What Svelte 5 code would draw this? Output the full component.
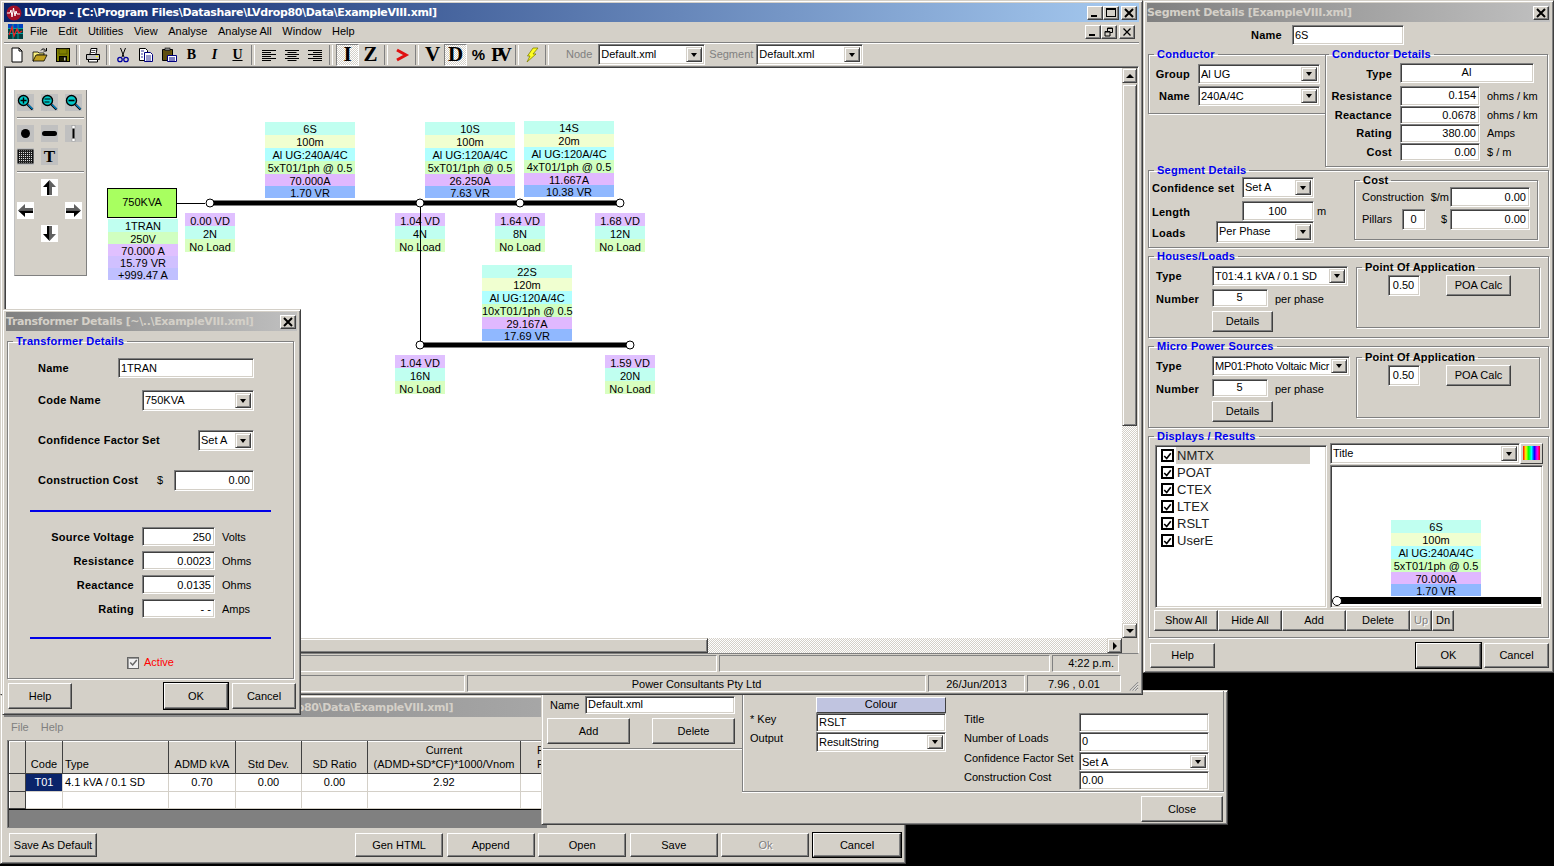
<script>
  const segStacks = [
    { x: 265, y: 122, rows: ["6S", "100m", "Al UG:240A/4C", "5xT01/1ph @ 0.5", "70.000A", "1.70 VR"] },
    { x: 425, y: 122, rows: ["10S", "100m", "Al UG:120A/4C", "5xT01/1ph @ 0.5", "26.250A", "7.63 VR"] },
    { x: 524, y: 121, rows: ["14S", "20m", "Al UG:120A/4C", "4xT01/1ph @ 0.5", "11.667A", "10.38 VR"] },
    { x: 482, y: 265, rows: ["22S", "120m", "Al UG:120A/4C", "10xT01/1ph @ 0.5", "29.167A", "17.69 VR"] },
  ];
  const nodeStacks = [
    { x: 185, y: 213, rows: ["0.00 VD", "2N", "No Load"] },
    { x: 395, y: 213, rows: ["1.04 VD", "4N", "No Load"] },
    { x: 495, y: 213, rows: ["1.64 VD", "8N", "No Load"] },
    { x: 595, y: 213, rows: ["1.68 VD", "12N", "No Load"] },
    { x: 395, y: 355, rows: ["1.04 VD", "16N", "No Load"] },
    { x: 605, y: 355, rows: ["1.59 VD", "20N", "No Load"] },
  ];
  const nodes = [[210, 203], [420, 203], [520, 203], [620, 203], [420, 345], [630, 345]];
  const menu = ["File", "Edit", "Utilities", "View", "Analyse", "Analyse All", "Window", "Help"];
  const displays = ["NMTX", "POAT", "CTEX", "LTEX", "RSLT", "UserE"];
  const bottomBtns = ["Gen HTML", "Append", "Open", "Save"];
</script>

{#snippet field(text, cls = "")}
  <div class="field {cls}">{text}</div>
{/snippet}

{#snippet combo(text, cls = "")}
  <div class="field combo {cls}"><span class="combo-text">{text}</span><i class="arrow"></i></div>
{/snippet}

{#snippet stack(rows)}
  <div class="seg-rows">
    {#each rows as row}<div>{row}</div>{/each}
  </div>
{/snippet}

{#snippet closeBtn()}
  <button class="cap-btn"><svg viewBox="0 0 10 10" width="10" height="10"><path d="M1 1l8 8M9 1l-8 8" stroke="#000" stroke-width="2"/></svg></button>
{/snippet}

{#snippet magnifier(mark)}
  <svg class="tool" viewBox="0 0 17 17" width="17" height="17">
    <rect width="17" height="17" fill="#c0c0c0"/>
    <path d="M10.5 10.5l5 5" stroke="#000" stroke-width="2.4"/>
    <path d="M11 10.5l4.5 4.5" stroke="#08c" stroke-width="1.2"/>
    <circle cx="6.5" cy="6.5" r="5" fill="#00c8c8" stroke="#000" stroke-width="1.4"/>
    {#if mark === "plus"}<path d="M3.5 6.5h6M6.5 3.5v6" stroke="#000" stroke-width="1.4"/>{/if}
    {#if mark === "eq"}<path d="M3.5 5h6M3.5 8h5" stroke="#000" stroke-width="1.2"/>{/if}
    {#if mark === "minus"}<path d="M3.5 6.5h6" stroke="#000" stroke-width="1.6"/>{/if}
  </svg>
{/snippet}

{#snippet poaGroup(name, type, cls)}
  <fieldset class="group hl-group">
    <legend>{name}</legend>
    <div class="hl-inner">
      <div class="hl-left">
        <div class="hl-row r1"><b>Type</b>{@render combo(type, cls)}</div>
        <div class="hl-row r2"><b>Number</b>{@render field("5", "w56 center")}<span class="pp">per phase</span></div>
        <button class="btn details">Details</button>
      </div>
      <fieldset class="group sub poa">
        <legend>Point Of Application</legend>
        <div class="poa-inner">
          {@render field("0.50", "w32 center")}
          <button class="btn poa-btn">POA Calc</button>
        </div>
      </fieldset>
    </div>
  </fieldset>
{/snippet}

<div class="desktop">
  <!-- load types window, lowest in the stack -->
  <section class="win loads">
    <div class="title off"><span class="loads-title">Load Types - [C:\Program Files\Datashare\LVdrop80\Data\ExampleVIII.xml]</span></div>
    <div class="loads-menu"><span>File</span><span>Help</span></div>
    <div class="grid-wrap">
      <table class="load-grid">
        <colgroup>
          <col class="c-h" /><col class="c-code" /><col class="c-type" /><col class="c-n" /><col class="c-n2" /><col class="c-n2" /><col class="c-cur" /><col class="c-f" />
        </colgroup>
        <thead>
          <tr>
            <th></th><th>Code</th><th class="left">Type</th><th>ADMD kVA</th><th>Std Dev.</th><th>SD Ratio</th>
            <th>Current<br />(ADMD+SD*CF)*1000/Vnom</th><th class="last">F<br />F</th>
          </tr>
        </thead>
        <tbody>
          <tr>
            <th></th><td class="sel">T01</td><td class="left">4.1 kVA / 0.1 SD</td><td>0.70</td><td>0.00</td><td>0.00</td><td>2.92</td><td></td>
          </tr>
          <tr class="blank"><th></th><td></td><td></td><td></td><td></td><td></td><td></td><td></td></tr>
        </tbody>
      </table>
      <div class="grid-empty"></div>
    </div>
    <div class="loads-btns">
      <button class="btn save-default">Save As Default</button>
      <div class="loads-right">
        {#each bottomBtns as b}<button class="btn b88">{b}</button>{/each}
        <button class="btn b88 disabled">Ok</button>
        <button class="btn b88 default">Cancel</button>
      </div>
    </div>
  </section>

  <!-- editor panel window overlapping the load table -->
  <section class="win editor">
    <div class="ed-left">
      <div class="ed-name"><span>Name</span>{@render field("Default.xml", "w150")}</div>
      <div class="ed-add">
        <button class="btn ed-btn">Add</button>
        <button class="btn ed-btn">Delete</button>
      </div>
    </div>
    <div class="ed-main">
      <div class="ed-group">
        <div class="colour">Colour</div>
        <span class="ed-l1">* Key</span>
        {@render field("RSLT", "ed-f1")}
        <span class="ed-l2">Output</span>
        {@render combo("ResultString", "ed-f2")}
        <span class="ed-r1">Title</span>
        {@render field("", "ed-g1")}
        <span class="ed-r2">Number of Loads</span>
        {@render field("0", "ed-g2")}
        <span class="ed-r3">Confidence Factor Set</span>
        {@render combo("Set A", "ed-g3")}
        <span class="ed-r4">Construction Cost</span>
        {@render field("0.00", "ed-g4")}
      </div>
      <button class="btn ed-close">Close</button>
    </div>
  </section>

  <!-- main application window -->
  <section class="win main">
    <div class="title on">
      <svg class="app-ico" viewBox="0 0 16 16" width="16" height="16">
        <circle cx="8" cy="8" r="7.5" fill="#a01028"/>
        <path d="M1 8h3l1-3 1 7 1.500-9 1.500 8 1-5 1 3h3" fill="none" stroke="#fff" stroke-width="1"/>
      </svg>
      <span class="title-text">LVDrop - [C:\Program Files\Datashare\LVdrop80\Data\ExampleVIII.xml]</span>
      <div class="caps">
        <button class="cap-btn"><i class="cap-min"></i></button>
        <button class="cap-btn"><i class="cap-max"></i></button>
        <button class="cap-btn gap"><svg viewBox="0 0 10 10" width="10" height="10"><path d="M1 1l8 8M9 1l-8 8" stroke="#000" stroke-width="2"/></svg></button>
      </div>
    </div>

    <div class="menubar">
      <svg class="child-ico" viewBox="0 0 15 15" width="15" height="15">
        <rect width="15" height="15" fill="#004040"/>
        <rect x="0" y="0" width="15" height="4" fill="#0040c0"/>
        <path d="M0 4.500h15M0 9.500h15M5 0v15M10 0v15" stroke="#00a0a0" stroke-width="1"/>
        <path d="M1 11l3-8 2 9 3-7 2 4 3-2" fill="none" stroke="#f02020" stroke-width="1.200"/>
      </svg>
      {#each menu as m}<span>{m}</span>{/each}
      <div class="caps child">
        <button class="cap-btn"><i class="cap-min"></i></button>
        <button class="cap-btn"><svg viewBox="0 0 10 10" width="10" height="10"><path d="M3.500 1h5v4.500h-5zM3.500 1.500h5" fill="none" stroke="#000"/><path d="M1 4.500h5V9H1zM1 5h5" fill="#d4d0c8" stroke="#000"/></svg></button>
        <button class="cap-btn gap"><svg viewBox="0 0 10 10" width="10" height="10"><path d="M1.500 1.500l7 7M8.500 1.500l-7 7" stroke="#000" stroke-width="1.300"/></svg></button>
      </div>
    </div>

    <div class="toolbar">
      <button class="tb"><svg viewBox="0 0 16 16" width="16" height="16"><path d="M3 1h7l3 3v11H3z" fill="#fff" stroke="#000"/><path d="M10 1v3h3" fill="none" stroke="#000"/></svg></button>
      <button class="tb"><svg viewBox="0 0 16 16" width="16" height="16"><path d="M1 5h5l1 1h5v2H5l-3 6H1z" fill="#f8f080" stroke="#000" stroke-width=".8"/><path d="M1 14l3-6h11l-3 6z" fill="#c0a020" stroke="#000" stroke-width=".8"/><path d="M9 3.500c1-2 3-2 4.500-.5M14.500 1v3h-3" fill="none" stroke="#000"/></svg></button>
      <button class="tb"><svg viewBox="0 0 16 16" width="16" height="16"><rect x="1.500" y="1.500" width="13" height="13" fill="#808000" stroke="#000"/><rect x="4" y="2" width="8" height="5" fill="#808000" stroke="#404000" stroke-width=".6"/><rect x="4.500" y="9.500" width="7" height="5" fill="#202000" stroke="#000"/><rect x="9" y="10.500" width="1.500" height="3" fill="#c0c0c0"/></svg></button>
      <i class="sep narrow"></i>
      <button class="tb"><svg viewBox="0 0 16 16" width="16" height="16"><path d="M5 7l1-5.500h6L11 7" fill="#fff" stroke="#000"/><path d="M1.500 7.500h13v5h-13z" fill="#c0c0c0" stroke="#000"/><path d="M3.500 12.500h9v2.500h-9z" fill="#fff" stroke="#000"/><path d="M6.500 3.500h4M6 5.500h4" stroke="#000" stroke-width=".7"/><rect x="11" y="9" width="2" height="1" fill="#ff0"/></svg></button>
      <i class="sep narrow"></i>
      <button class="tb"><svg viewBox="0 0 16 16" width="16" height="16"><path d="M5.500 1l3.500 9M10.500 1L7 10" stroke="#000" stroke-width="1"/><circle cx="5" cy="12.500" r="2.200" fill="none" stroke="#0000a0" stroke-width="1.300"/><circle cx="11" cy="12.500" r="2.200" fill="none" stroke="#0000a0" stroke-width="1.300"/></svg></button>
      <button class="tb"><svg viewBox="0 0 16 16" width="16" height="16"><path d="M1.500 1.500h6l2 2v3h-3v7h-5z" fill="#fff" stroke="#000"/><path d="M6.500 5.500h6l2 2v7h-8z" fill="#fff" stroke="#000080"/><path d="M3 4h3M3 7h2M3 10h2M8 9h5M8 11h5M8 13h5" stroke="#000080" stroke-width=".8"/></svg></button>
      <button class="tb"><svg viewBox="0 0 16 16" width="16" height="16"><path d="M1.500 2.500h10v11h-10z" fill="#806000" stroke="#000"/><path d="M2 4h9M2 6h9M2 8h9M2 10h9M2 12h9M3 3v10M5 3v10M7 3v10M9 3v10" stroke="#404020" stroke-width=".6"/><rect x="4" y="1" width="5" height="2.500" fill="#808080" stroke="#000" stroke-width=".6"/><path d="M6.500 8.500h9v6h-9z" fill="#fff" stroke="#000080"/><path d="M8 11h6M8 13h6" stroke="#000080"/></svg></button>
      <button class="tb serif big-b">B</button>
      <button class="tb serif big-i">I</button>
      <button class="tb serif big-u">U</button>
      <i class="sep"></i>
      <button class="tb"><svg viewBox="0 0 16 16" width="16" height="16"><path d="M1 3.500h14M1 5.500h9M1 7.500h14M1 9.500h9M1 11.500h14M1 13.500h9" stroke="#000"/></svg></button>
      <button class="tb"><svg viewBox="0 0 16 16" width="16" height="16"><path d="M1 3.500h14M3.500 5.500h9M1 7.500h14M3.500 9.500h9M1 11.500h14M3.500 13.500h9" stroke="#000"/></svg></button>
      <button class="tb"><svg viewBox="0 0 16 16" width="16" height="16"><path d="M1 3.500h14M6 5.500h9M1 7.500h14M6 9.500h9M1 11.500h14M6 13.500h9" stroke="#000"/></svg></button>
      <i class="sep wide"></i>
      <button class="tb pressed serif big-l">I</button>
      <button class="tb serif big-l">Z</button>
      <i class="sep"></i>
      <button class="tb"><svg viewBox="0 0 16 16" width="16" height="16"><path d="M3 3l9 5-9 5" fill="none" stroke="#e01010" stroke-width="3"/></svg></button>
      <i class="sep"></i>
      <button class="tb serif big-l">V</button>
      <button class="tb pressed serif big-l">D</button>
      <button class="tb pct">%</button>
      <button class="tb serif pv">PV</button>
      <i class="sep narrow"></i>
      <button class="tb"><svg viewBox="0 0 16 16" width="16" height="16"><path d="M9 1h5L9 7h3L3 15l3-6H3.500z" fill="#ffff20" stroke="#808000" stroke-width=".8"/></svg></button>
      <i class="sep"></i>
      <span class="tb-label node-l">Node</span>
      {@render combo("Default.xml", "tb-combo")}
      <span class="tb-label seg-l">Segment</span>
      {@render combo("Default.xml", "tb-combo")}
    </div>

    <div class="body">
      <div class="body-top">
        <div class="canvas">
          <div class="diagram">
            <svg class="wires" width="1130" height="640" viewBox="0 0 1130 640">
              <path d="M177 203.500h28" stroke="#000" stroke-width="1"/>
              <path d="M210 203h410M420 345h210" stroke="#000" stroke-width="5"/>
            </svg>
            <div class="tx-box">750KVA</div>
            <div class="tx-rows">
              <div>1TRAN</div><div>250V</div><div>70.000 A</div><div>15.79 VR</div><div>+999.47 A</div>
            </div>
            {#each segStacks as s}
              <div class="seg" style:left="{s.x}px" style:top="{s.y}px">{@render stack(s.rows)}</div>
            {/each}
            {#each nodeStacks as n}
              <div class="node-rows" style:left="{n.x}px" style:top="{n.y}px">
                {#each n.rows as r}<div>{r}</div>{/each}
              </div>
            {/each}
            <svg class="wires top" width="1130" height="640" viewBox="0 0 1130 640">
              <path d="M420.500 207v138" stroke="#000" stroke-width="1"/>
              {#each nodes as [cx, cy]}
                <circle {cx} {cy} r="4" fill="#fff" stroke="#000"/>
              {/each}
            </svg>
          </div>

          <div class="palette">
            <div class="pal-grid">
              {@render magnifier("plus")}
              {@render magnifier("eq")}
              {@render magnifier("minus")}
            </div>
            <hr class="pal-sep" />
            <div class="pal-grid">
              <svg class="tool" viewBox="0 0 17 17" width="17" height="17"><rect width="17" height="17" fill="#c0c0c0"/><circle cx="8.500" cy="8.500" r="4.500"/></svg>
              <svg class="tool" viewBox="0 0 17 17" width="17" height="17"><rect width="17" height="17" fill="#c0c0c0"/><rect x="1" y="6" width="15" height="5" rx="2.500"/></svg>
              <svg class="tool" viewBox="0 0 17 17" width="17" height="17"><rect width="17" height="17" fill="#c0c0c0"/><path d="M8.500 2v13" stroke="#000" stroke-width="2"/><rect x="7" y="0.500" width="3" height="3" fill="#fff" stroke="#888" stroke-width=".5"/><rect x="7" y="13.500" width="3" height="3" fill="#fff" stroke="#888" stroke-width=".5"/></svg>
              <svg class="tool" viewBox="0 0 17 17" width="17" height="17"><defs><pattern id="hatch" width="2" height="2" patternUnits="userSpaceOnUse"><rect width="2" height="2" fill="#222"/><rect width="1" height="1" fill="#ddd"/></pattern></defs><rect width="17" height="17" fill="#c0c0c0"/><rect x="1" y="2" width="15" height="13" fill="url(#hatch)" stroke="#000"/></svg>
              <div class="tool t-tool">T</div>
              <span></span>
            </div>
            <hr class="pal-sep" />
            <div class="pal-grid arrows">
              <span></span>
              <svg class="tool" viewBox="0 0 17 17" width="17" height="17"><rect width="17" height="17" fill="#fff"/><path d="M8.500 1L15 8h-4v8H8.500z" fill="#606060"/><path d="M8.500 1L2 8h4v8h2.500z" fill="#000"/></svg>
              <span></span>
              <svg class="tool" viewBox="0 0 17 17" width="17" height="17"><rect width="17" height="17" fill="#fff"/><path d="M1 8.500L8 2v4h8v2.500z" fill="#606060"/><path d="M1 8.500L8 15v-4h8V8.500z" fill="#000"/></svg>
              <span></span>
              <svg class="tool" viewBox="0 0 17 17" width="17" height="17"><rect width="17" height="17" fill="#fff"/><path d="M16 8.500L9 2v4H1v2.500z" fill="#606060"/><path d="M16 8.500L9 15v-4H1V8.500z" fill="#000"/></svg>
              <span></span>
              <svg class="tool" viewBox="0 0 17 17" width="17" height="17"><rect width="17" height="17" fill="#fff"/><path d="M8.500 16L15 9h-4V1H8.500z" fill="#606060"/><path d="M8.500 16L2 9h4V1h2.500z" fill="#000"/></svg>
              <span></span>
            </div>
          </div>
        </div>
        <div class="vscroll">
          <button class="sb-btn"><i class="tri up"></i></button>
          <div class="v-thumb"></div>
          <div class="track"></div>
          <button class="sb-btn"><i class="tri down"></i></button>
        </div>
      </div>
      <div class="hscroll">
        <div class="h-thumb"></div>
        <div class="track"></div>
        <button class="sb-btn"><i class="tri right"></i></button>
      </div>
    </div>

    <div class="status s1">
      <div class="st st-a"></div>
      <div class="st st-b"></div>
      <div class="st st-c">4:22 p.m.</div>
    </div>
    <div class="status s2">
      <div class="st st-d"></div>
      <div class="st st-e">Power Consultants Pty Ltd</div>
      <div class="st st-f">26/Jun/2013</div>
      <div class="st st-g">7.96 , 0.01</div>
      <svg class="grip" viewBox="0 0 12 12" width="12" height="12"><path d="M11 2L2 11M11 5l-6 6M11 8l-3 3" stroke="#808080" stroke-width="1.200"/><path d="M11 3l-8 8M11 6l-5 5M11 9l-2 2" stroke="#fff" stroke-width=".8"/></svg>
    </div>
  </section>

  <!-- transformer dialog -->
  <section class="win transformer">
    <div class="title off">
      <span class="title-text">Transformer Details [~\..\ExampleVIII.xml]</span>
      {@render closeBtn()}
    </div>
    <fieldset class="group tx-group">
      <legend>Transformer Details</legend>
      <div class="tx-row r-name"><b>Name</b>{@render field("1TRAN", "w136")}</div>
      <div class="tx-row r-code"><b>Code Name</b>{@render combo("750KVA", "w112 h21")}</div>
      <div class="tx-row r-conf"><b>Confidence Factor Set</b>{@render combo("Set A", "w56 h21")}</div>
      <div class="tx-row r-cost"><b>Construction Cost</b><span class="dollar">$</span>{@render field("0.00", "w80 h21 right")}</div>
      <hr class="blue first" />
      <div class="volt-grid">
        <b>Source Voltage</b>{@render field("250", "right")}<span>Volts</span>
        <b>Resistance</b>{@render field("0.0023", "right")}<span>Ohms</span>
        <b>Reactance</b>{@render field("0.0135", "right")}<span>Ohms</span>
        <b>Rating</b>{@render field("- -", "right")}<span>Amps</span>
      </div>
      <hr class="blue second" />
      <div class="active"><i class="check small"><svg viewBox="0 0 11 11" width="9" height="9"><path d="M1.500 5.500l3 3 5-6" fill="none" stroke="#666" stroke-width="1.800"/></svg></i><span>Active</span></div>
    </fieldset>
    <div class="dlg-btns tx-btns">
      <button class="btn b64">Help</button>
      <span class="spring"></span>
      <button class="btn b64 default">OK</button>
      <button class="btn b64">Cancel</button>
    </div>
  </section>

  <!-- segment dialog -->
  <section class="win segment">
    <div class="title off">
      <span class="title-text">Segment Details [ExampleVIII.xml]</span>
      {@render closeBtn()}
    </div>
    <div class="name-row"><b>Name</b>{@render field("6S", "w112")}</div>

    <div class="cond-row">
      <fieldset class="group cond">
        <legend>Conductor</legend>
        <div class="cond-grid">
          <b>Group</b>{@render combo("Al UG")}
          <b>Name</b>{@render combo("240A/4C")}
        </div>
      </fieldset>
      <fieldset class="group cond-d">
        <legend>Conductor Details</legend>
        <div class="cd-grid">
          <b>Type</b>{@render field("Al", "cd-type center")}
          <b>Resistance</b>{@render field("0.154", "right")}<span>ohms / km</span>
          <b>Reactance</b>{@render field("0.0678", "right")}<span>ohms / km</span>
          <b>Rating</b>{@render field("380.00", "right")}<span>Amps</span>
          <b>Cost</b>{@render field("0.00", "right")}<span>$ / m</span>
        </div>
      </fieldset>
    </div>

    <fieldset class="group sd">
      <legend>Segment Details</legend>
      <div class="sd-inner">
        <div class="sd-left">
          <div class="sd-row h21"><b>Confidence set</b>{@render combo("Set A", "w72")}<span></span></div>
          <div class="sd-row h20 second"><b>Length</b>{@render field("100", "w72 center")}<span class="unit-m">m</span></div>
          <div class="sd-row h22"><b>Loads</b>{@render combo("Per Phase", "w98")}<span></span></div>
        </div>
        <fieldset class="group sub cost">
          <legend>Cost</legend>
          <div class="cost-row"><span class="grow">Construction</span><span class="dm">$/m</span>{@render field("0.00", "w80 right")}</div>
          <div class="cost-row two"><span class="pil">Pillars</span>{@render field("0", "w24 center")}<span class="cost-d">$</span>{@render field("0.00", "w80 right")}</div>
        </fieldset>
      </div>
    </fieldset>

    {@render poaGroup("Houses/Loads", "T01:4.1 kVA / 0.1 SD", "w136")}
    {@render poaGroup("Micro Power Sources", "MP01:Photo Voltaic Micr", "w138 tight")}

    <fieldset class="group disp">
      <legend>Displays / Results</legend>
      <div class="disp-top">
        <div class="field list">
          {#each displays as d, i}
            <div class="list-item">
              <i class="check"><svg viewBox="0 0 11 11" width="10" height="10"><path d="M1.500 5.500l3 3 5-6.500" fill="none" stroke="#000" stroke-width="2"/></svg></i>
              <span class:hl={i === 0}>{d}</span>
            </div>
          {/each}
        </div>
        <div class="disp-right">
          <div class="disp-combo">
            {@render combo("Title", "grow")}
            <button class="rainbow"><i></i></button>
          </div>
          <div class="field preview">
            <div class="preview-stack">{@render stack(segStacks[0].rows)}</div>
            <div class="preview-bar"></div>
            <i class="preview-dot"></i>
          </div>
        </div>
      </div>
      <div class="disp-btns">
        <button class="btn b64">Show All</button>
        <button class="btn b64">Hide All</button>
        <button class="btn b64">Add</button>
        <button class="btn b64">Delete</button>
        <button class="btn b22 disabled">Up</button>
        <button class="btn b22">Dn</button>
      </div>
    </fieldset>

    <div class="dlg-btns seg-btns">
      <button class="btn b65">Help</button>
      <span class="spring"></span>
      <button class="btn b65 default">OK</button>
      <button class="btn b65">Cancel</button>
    </div>
  </section>
</div>

<style>
  :global(body) {
    margin: 0;
    background: #000;
  }

  * {
    box-sizing: border-box;
  }

  .desktop {
    position: relative;
    width: 1554px;
    height: 866px;
    overflow: hidden;
    background: #000;
    font: 11px/13px "Liberation Sans", Arial, sans-serif;
    color: #000;
  }

  b {
    letter-spacing: 0.25px;
  }

  /* windows */
  .win {
    position: absolute;
    display: flex;
    flex-direction: column;
    background: #d4d0c8;
    border: 1px solid;
    border-color: #d4d0c8 #404040 #404040 #d4d0c8;
    box-shadow: inset 1px 1px #fff, inset -1px -1px #808080;
    padding: 1px 2px;
  }

  .main {
    left: 0;
    top: 0;
    width: 1143px;
    height: 695px;
  }

  .transformer {
    left: 2px;
    top: 309px;
    width: 299px;
    height: 406px;
  }

  .segment {
    left: 1143px;
    top: 0;
    width: 411px;
    height: 673px;
  }

  .loads {
    left: 0;
    top: 695px;
    width: 906px;
    height: 169px;
  }

  .editor {
    left: 541px;
    top: 690px;
    width: 687px;
    height: 135px;
    flex-direction: row;
    padding: 0 2px 0 1px;
  }

  /* title bars */
  .title {
    flex: none;
    display: flex;
    align-items: center;
    height: 19px;
    margin: 1px 1px 0;
    padding: 0 2px;
    font: bold 11px/19px "DejaVu Sans", Verdana, sans-serif;
    white-space: nowrap;
    overflow: hidden;
  }

  .title.on {
    color: #fff;
    background: linear-gradient(90deg, #0a246a, #a6caf0);
  }

  .title.off {
    color: #d4d0c8;
    padding: 0 1px 0 0;
    background: linear-gradient(90deg, #808080, #c0c0c0);
  }

  .title-text {
    flex: 1;
    letter-spacing: -0.35px;
  }

  .loads-title {
    letter-spacing: -0.35px;
    padding-left: 13px;
  }

  .app-ico {
    margin-right: 2px;
  }

  .caps {
    display: flex;
    margin-left: auto;
  }

  .caps.child {
    margin-right: 3px;
  }

  .cap-btn {
    width: 16px;
    height: 14px;
    padding: 0;
    display: flex;
    align-items: center;
    justify-content: center;
    background: #d4d0c8;
    border: 1px solid;
    border-color: #fff #404040 #404040 #fff;
    box-shadow: inset -1px -1px #808080;
    flex: none;
  }

  .cap-btn.gap {
    margin-left: 2px;
  }

  .cap-min {
    width: 6px;
    height: 2px;
    background: #000;
    margin: 6px 3px 0 0;
  }

  .cap-max {
    width: 10px;
    height: 9px;
    border: 1px solid #000;
    border-top-width: 2px;
  }

  /* menu + toolbar */
  .menubar {
    flex: none;
    display: flex;
    align-items: center;
    gap: 10.6px;
    height: 21px;
    padding: 0 1px 1px 4px;
    margin: 0 1px;
    border-bottom: 1px solid #808080;
    box-shadow: 0 1px #fff;
  }

  .child-ico {
    margin-right: -3.6px;
  }

  .toolbar {
    flex: none;
    display: flex;
    align-items: center;
    height: 23px;
    padding-left: 1px;
    margin: 0 1px;
  }

  .tb {
    flex: none;
    width: 23px;
    height: 22px;
    padding: 0;
    border: 0;
    background: none;
    display: flex;
    align-items: center;
    justify-content: center;
    color: #000;
  }

  .tb.pressed {
    border: 1px solid;
    border-color: #808080 #fff #fff #808080;
    background: repeating-conic-gradient(#d4d0c8 0 25%, #fff 0 50%) 0 0 / 2px 2px;
  }

  .serif {
    font-family: "Liberation Serif", "Times New Roman", serif;
    font-weight: bold;
  }

  .big-b, .big-i, .big-u {
    font-size: 14px;
  }

  .big-i {
    font-style: italic;
  }

  .big-u {
    text-decoration: underline;
  }

  .big-l {
    font-size: 21px;
  }

  .pct {
    font: bold 15px "Liberation Sans", sans-serif;
  }

  .pv {
    font-size: 19px;
    letter-spacing: -5px;
    padding-right: 5px;
  }

  .sep {
    flex: none;
    width: 8px;
    height: 20px;
  }

  .sep::after {
    content: "";
    display: block;
    width: 2px;
    height: 100%;
    margin: 0 auto;
    border-left: 1px solid #808080;
    border-right: 1px solid #fff;
  }

  .sep.narrow {
    width: 7px;
  }

  .sep.wide {
    width: 10px;
  }

  .tb-label {
    color: #808080;
  }

  .node-l {
    margin: 0 6px 0 15px;
  }

  .seg-l {
    margin: 0 3px 0 4px;
  }

  /* form controls */
  .field {
    flex: none;
    background: #fff;
    border: 1px solid;
    border-color: #808080 #fff #fff #808080;
    box-shadow: inset 1px 1px #404040, inset -1px -1px #d4d0c8;
    padding: 1px 3px 1px 2px;
    min-height: 18px;
    line-height: 16px;
    white-space: nowrap;
    overflow: hidden;
  }

  .right {
    text-align: right;
  }

  .center {
    text-align: center;
  }

  .tight {
    letter-spacing: -0.25px;
  }

  .combo {
    display: flex;
    padding: 2px;
  }

  .combo-text {
    flex: 1;
    min-width: 0;
    overflow: hidden;
    line-height: 15px;
  }

  .arrow {
    flex: none;
    width: 16px;
    display: flex;
    align-items: center;
    justify-content: center;
    background: #d4d0c8;
    border: 1px solid;
    border-color: #d4d0c8 #404040 #404040 #d4d0c8;
    box-shadow: inset 1px 1px #fff, inset -1px -1px #808080;
  }

  .arrow::after {
    content: "";
    border: 3.5px solid transparent;
    border-top: 4px solid #000;
    border-bottom: 0;
  }

  .tb-combo {
    width: 107px;
    height: 21px;
  }

  .btn {
    flex: none;
    padding: 0;
    font: inherit;
    color: #000;
    background: #d4d0c8;
    border: 1px solid;
    border-color: #fff #404040 #404040 #fff;
    box-shadow: inset -1px -1px #808080;
  }

  .btn.default {
    outline: 1px solid #000;
    outline-offset: 0;
  }

  .btn.disabled {
    color: #808080;
    text-shadow: 1px 1px #fff;
  }

  .b64 { width: 64px; }
  .b65 { width: 65px; }
  .b22 { width: 22px; }
  .b88 { width: 88px; }

  .w24 { width: 24px; }
  .w32 { width: 32px; }
  .w56 { width: 56px; }
  .w72 { width: 72px; }
  .w80 { width: 80px; }
  .w98 { width: 98px; }
  .w112 { width: 112px; }
  .w136 { width: 136px; }
  .w138 { width: 138px; }
  .w150 { width: 150px; }
  .h21 { height: 21px; }
  .h20 { height: 20px; }
  .h22 { height: 22px; }

  .grow {
    flex: 1;
  }

  .spring {
    flex: 1;
  }

  .group {
    margin: 0;
    padding: 0;
    min-width: 0;
    border: 1px solid #808080;
    box-shadow: inset 1px 1px #fff, 1px 1px #fff;
  }

  .group legend {
    margin-left: 5px;
    padding: 0 3px;
    font-weight: bold;
    letter-spacing: 0.25px;
    line-height: 12px;
    color: #0000f0;
  }

  .group.sub legend {
    color: #000;
  }

  /* main body */
  .body {
    flex: none;
    display: flex;
    flex-direction: column;
    height: 588px;
    margin: 0 1px;
    border: 1px solid #808080;
    border-right-color: #fff;
    box-shadow: inset 1px 1px #404040;
    padding: 1px 0 0 1px;
  }

  .body-top {
    flex: 1;
    min-height: 0;
    display: flex;
  }

  .canvas {
    flex: 1;
    position: relative;
    overflow: hidden;
    background: #fff;
  }

  .diagram {
    position: absolute;
    left: -6px;
    top: -68px;
    width: 1130px;
    height: 640px;
  }

  .wires {
    position: absolute;
    left: 0;
    top: 0;
  }

  .tx-box {
    position: absolute;
    left: 107px;
    top: 188px;
    width: 70px;
    height: 30px;
    border: 1px solid #000;
    background: #a8ff60;
    text-align: center;
    line-height: 27px;
  }

  .tx-rows {
    position: absolute;
    left: 108px;
    top: 219px;
    width: 70px;
    text-align: center;
  }

  .tx-rows div {
    height: 12px;
    line-height: 14px;
  }

  .tx-rows div:nth-child(1) { background: #c0fff0; height: 13px; }
  .tx-rows div:nth-child(2) { background: #d0ffc0; }
  .tx-rows div:nth-child(3) { background: #e0c0ff; }
  .tx-rows div:nth-child(4) { background: #d0c0ff; }
  .tx-rows div:nth-child(5) { background: #c0c0ff; }

  .seg {
    position: absolute;
    width: 90px;
  }

  .seg-rows {
    width: 90px;
    text-align: center;
    white-space: nowrap;
  }

  .seg-rows div {
    height: 13px;
    line-height: 15px;
  }

  .seg-rows div:nth-child(1) { background: #c0fff0; }
  .seg-rows div:nth-child(2) { background: #f0ffd0; }
  .seg-rows div:nth-child(3) { background: #b0ffff; }
  .seg-rows div:nth-child(4) { background: #d0ffc0; }
  .seg-rows div:nth-child(5) { background: #e0b8ff; height: 12px; line-height: 14px; }
  .seg-rows div:nth-child(6) { background: #90b8ff; height: 12px; line-height: 14px; }

  .node-rows {
    position: absolute;
    width: 50px;
    text-align: center;
  }

  .node-rows div {
    height: 13px;
    line-height: 16px;
  }

  .node-rows div:nth-child(1) { background: #e0c0ff; }
  .node-rows div:nth-child(2) { background: #c0fff0; }
  .node-rows div:nth-child(3) { background: #d8ffc0; }

  .palette {
    position: absolute;
    left: 8px;
    top: 22px;
    width: 73px;
    height: 186px;
    padding-top: 4px;
    background: #d4d0c8;
    border-right: 1px solid #808080;
    border-bottom: 1px solid #808080;
    border-left: 1px solid #c0c0c0;
  }

  .pal-grid {
    display: grid;
    grid-template-columns: repeat(3, 17px);
    gap: 6px 7px;
    padding-left: 2px;
  }

  .pal-sep {
    height: 2px;
    margin: 6px 2px;
    border: 0;
    border-top: 1px solid #808080;
    border-bottom: 1px solid #fff;
  }

  .tool {
    display: block;
    width: 17px;
    height: 17px;
  }

  .t-tool {
    background: #c0c0c0;
    text-align: center;
    font: bold 17px/17px "Liberation Serif", serif;
  }

  .vscroll {
    flex: none;
    width: 16px;
    display: flex;
    flex-direction: column;
    padding-right: 1px;
  }

  .sb-btn {
    flex: none;
    width: 15px;
    height: 15px;
    padding: 0;
    display: flex;
    align-items: center;
    justify-content: center;
    background: #d4d0c8;
    border: 1px solid;
    border-color: #d4d0c8 #404040 #404040 #d4d0c8;
    box-shadow: inset 1px 1px #fff, inset -1px -1px #808080;
  }

  .tri {
    border: 4px solid transparent;
    width: 0;
    height: 0;
  }

  .tri.up { border-bottom-color: #000; border-top-width: 0; }
  .tri.down { border-top-color: #000; border-bottom-width: 0; }
  .tri.right { border-left-color: #000; border-right-width: 0; }

  .v-thumb {
    flex: none;
    height: 342px;
    margin-top: 1px;
    background: #d4d0c8;
    border: 1px solid;
    border-color: #d4d0c8 #404040 #404040 #d4d0c8;
    box-shadow: inset 1px 1px #fff, inset -1px -1px #808080;
  }

  .track {
    flex: 1;
    background: repeating-conic-gradient(#d4d0c8 0 25%, #fff 0 50%) 0 0 / 2px 2px;
  }

  .hscroll {
    flex: none;
    display: flex;
    height: 15px;
    margin: 0 16px 0 0;
  }

  .h-thumb {
    flex: none;
    width: 702px;
    background: #d4d0c8;
    border: 1px solid;
    border-color: #d4d0c8 #404040 #404040 #d4d0c8;
    box-shadow: inset 1px 1px #fff, inset -1px -1px #808080;
  }

  /* status bars */
  .status {
    flex: none;
    display: flex;
    height: 17px;
    gap: 2px;
    padding-left: 2px;
    margin: 0 1px;
    line-height: 15px;
  }

  .status.s1 {
    margin-top: 1px;
  }

  .status.s2 {
    margin-top: 3px;
    line-height: 16px;
  }

  .st {
    flex: none;
    border: 1px solid;
    border-color: #808080 #fff #fff #808080;
    text-align: center;
    overflow: hidden;
    white-space: nowrap;
  }

  .st-a { width: 711px; }
  .st-b { width: 331px; }
  .st-c { width: 67px; text-align: right; padding-right: 4px; }
  .st-d { width: 459px; }
  .st-e { width: 459px; }
  .st-f { width: 97px; }
  .st-g { width: 94px; }

  .grip {
    align-self: flex-end;
    margin-left: 5px;
  }

  /* transformer dialog */
  .tx-group {
    flex: none;
    height: 344px;
    margin: 4px 0 0 2px;
    width: 287px;
  }

  .tx-row {
    display: flex;
    align-items: center;
    justify-content: space-between;
    width: 246px;
    padding-left: 30px;
  }

  .tx-row .dollar {
    margin-left: auto;
    margin-right: 11px;
  }

  .r-name { margin-top: 11px; height: 20px; }
  .r-code { margin-top: 12px; height: 21px; }
  .r-conf { margin-top: 19px; height: 21px; }
  .r-cost { margin-top: 19px; height: 21px; }

  .blue {
    height: 2px;
    width: 241px;
    margin: 0 0 0 22px;
    border: 0;
    background: #0000e8;
  }

  .blue.first { margin-top: 19px; }
  .blue.second { margin-top: 19px; }

  .volt-grid {
    display: grid;
    grid-template-columns: 134px 73px 1fr;
    grid-auto-rows: 19px;
    row-gap: 5px;
    align-items: center;
    margin-top: 15px;
  }

  .volt-grid b {
    text-align: right;
    padding: 2px 8px 0 0;
  }

  .volt-grid span {
    padding: 2px 0 0 7px;
  }

  .volt-grid .field {
    height: 19px;
  }

  .active {
    display: flex;
    align-items: center;
    margin: 17px 0 0 119px;
    color: #ff0000;
    gap: 5px;
  }

  .check {
    flex: none;
    width: 13px;
    height: 13px;
    display: flex;
    align-items: center;
    justify-content: center;
    border: 2px solid #000;
    background: #fff;
  }

  .check.small {
    width: 12px;
    height: 12px;
    border: 1px solid #666;
    background: #f0f0f0;
    box-shadow: inset 1px 1px #999;
  }

  .dlg-btns {
    flex: none;
    display: flex;
    gap: 4px;
  }

  .tx-btns {
    height: 26px;
    margin: 4px 2px 0 3px;
  }

  /* segment dialog */
  .name-row {
    flex: none;
    display: flex;
    align-items: center;
    justify-content: flex-end;
    gap: 10px;
    height: 20px;
    margin: 3px 147px 3px 0;
  }

  .name-row .field {
    height: 20px;
  }

  .cond-row {
    flex: none;
    display: flex;
    align-items: flex-start;
    height: 116px;
    margin-left: 2px;
  }

  .cond {
    width: 178px;
    height: 66px;
  }

  .cond-grid {
    display: grid;
    grid-template-columns: 49px 122px;
    grid-auto-rows: 20px;
    row-gap: 2px;
    align-items: center;
    padding-top: 4px;
  }

  .cond-grid b {
    text-align: right;
    padding-right: 8px;
  }

  .cond-grid .field {
    height: 20px;
  }

  .cond-d {
    width: 223px;
    height: 119px;
    margin-left: -1px;
  }

  .cond-d legend {
    margin-left: 3px;
  }

  .cd-grid {
    display: grid;
    grid-template-columns: 74px 80px 1fr;
    grid-template-rows: 23px 20px 18px 19px 18px;
    align-items: center;
    padding-top: 3px;
  }

  .cd-grid b {
    text-align: right;
    padding-right: 8px;
  }

  .cd-grid span {
    padding-left: 7px;
    white-space: nowrap;
  }

  .cd-grid .field {
    height: 100%;
    min-height: 0;
    line-height: 15px;
  }

  .cd-grid .cd-type {
    grid-column: 2 / 4;
    width: 134px;
    height: 20px;
    align-self: start;
  }

  .sd {
    flex: none;
    width: 401px;
    height: 84px;
    margin-left: 2px;
  }

  .sd-inner {
    display: flex;
    padding-left: 3px;
  }

  .sd-left {
    width: 202px;
    padding-top: 1px;
  }

  .sd-row {
    display: grid;
    grid-template-columns: 1fr auto 40px;
    align-items: center;
  }

  .sd-row b {
    padding-top: 2px;
  }

  .sd-row .field {
    height: 100%;
  }

  .sd-row.second {
    margin-top: 3px;
  }

  .unit-m {
    padding-left: 3px;
  }

  .cost {
    width: 184px;
    height: 66px;
    margin-top: -2px;
  }

  .cost-row {
    display: flex;
    align-items: center;
    height: 20px;
    padding: 0 7px;
    margin-top: 1px;
  }

  .cost-row .field {
    height: 100%;
  }

  .cost-row.two {
    height: 21px;
    margin-top: 2px;
  }

  .dm {
    margin-right: 1px;
  }

  .pil {
    width: 40px;
  }

  .cost-d {
    margin: 0 3px 0 15px;
    width: 6px;
  }

  .hl-group {
    flex: none;
    width: 401px;
    height: 88px;
    margin: 2px 0 0 2px;
  }

  .hl-inner {
    display: flex;
  }

  .hl-left {
    width: 207px;
    padding: 4px 0 0 7px;
  }

  .hl-row {
    display: flex;
    align-items: center;
  }

  .hl-row b {
    width: 56px;
  }

  .hl-row.r1 {
    height: 20px;
  }

  .hl-row.r1 .field {
    height: 20px;
  }

  .hl-row.r2 {
    height: 18px;
    margin-top: 3px;
  }

  .hl-row.r2 b,
  .hl-row.r2 .pp {
    padding-top: 3px;
  }

  .hl-row.r2 .field {
    height: 18px;
    line-height: 13px;
  }

  .pp {
    margin-left: 7px;
  }

  .details {
    display: block;
    width: 61px;
    height: 21px;
    margin: 4px 0 0 56px;
  }

  .poa {
    width: 184px;
    height: 67px;
    margin-top: -1px;
  }

  .poa-inner {
    display: flex;
    padding: 2px 0 0 31px;
    gap: 26px;
  }

  .poa-inner .field {
    height: 21px;
  }

  .poa-btn {
    width: 65px;
    height: 21px;
  }

  .disp {
    flex: none;
    width: 401px;
    height: 208px;
    margin: 2px 0 0 2px;
  }

  .disp-top {
    display: flex;
    gap: 3px;
    padding: 1px 0 0 6px;
  }

  .list {
    width: 172px;
    height: 163px;
    margin-top: 2px;
    padding: 1px 0 0 5px;
  }

  .list-item {
    display: flex;
    align-items: center;
    height: 17px;
    font-size: 13px;
    line-height: 17px;
    gap: 2px;
  }

  .list-item span {
    padding-left: 1px;
    flex: none;
    width: 134px;
    color: #222;
  }

  .list-item .hl {
    background: #d4d0c8;
  }

  .disp-right {
    width: 213px;
  }

  .disp-combo {
    display: flex;
    height: 21px;
    margin-bottom: 1px;
  }

  .disp-combo .field {
    height: 21px;
  }

  .rainbow {
    flex: none;
    width: 23px;
    height: 21px;
    padding: 2px 2px 3px;
    background: #d4d0c8;
    border: 1px solid;
    border-color: #fff #404040 #404040 #fff;
  }

  .rainbow i {
    display: block;
    height: 100%;
    background: linear-gradient(90deg, #f00, #ff0, #0f0, #0ff, #00f, #f0f, #f00);
  }

  .preview {
    position: relative;
    height: 143px;
    display: flex;
    flex-direction: column;
    justify-content: flex-end;
    padding: 0 0 3px;
  }

  .preview-stack {
    margin-left: 60px;
  }

  .preview-bar {
    height: 7px;
    margin: 1px 1px 0 6px;
    background: #000;
  }

  .preview-dot {
    position: absolute;
    left: 1px;
    bottom: 1px;
    width: 10px;
    height: 10px;
    border: 1px solid #000;
    border-radius: 50%;
    background: #fff;
  }

  .disp-btns {
    display: flex;
    height: 21px;
    margin: 2px 0 0 5px;
  }

  .seg-btns {
    height: 25px;
    margin: 5px 0 0 4px;
    width: 399px;
    gap: 3px;
  }

  /* loads window */
  .loads-menu {
    flex: none;
    display: flex;
    gap: 12px;
    height: 23px;
    padding: 4px 0 0 8px;
    color: #808080;
  }

  .grid-wrap {
    flex: none;
    width: 540px;
    height: 88px;
    margin-left: 4px;
    overflow: hidden;
    border: 1px solid #808080;
    box-shadow: inset 1px 1px #404040;
    background: #808080;
    padding: 0 0 0 1px;
  }

  .load-grid {
    table-layout: fixed;
    width: 571px;
    border-collapse: collapse;
    background: #fff;
  }

  .c-h { width: 16px; }
  .c-code { width: 37px; }
  .c-type { width: 106px; }
  .c-n { width: 67px; }
  .c-n2 { width: 66px; }
  .c-cur { width: 153px; }
  .c-f { width: 60px; }

  .load-grid th,
  .load-grid td {
    padding: 1px 2px;
    font-weight: normal;
    text-align: center;
    vertical-align: bottom;
    white-space: nowrap;
    overflow: hidden;
  }

  .load-grid thead th {
    height: 31px;
    line-height: 14px;
    padding-bottom: 2px;
    background: #d4d0c8;
    border: 1px solid;
    border-color: #fff #404040 #404040 #fff;
  }

  .load-grid thead .last {
    text-align: left;
    padding-left: 16px;
  }

  .load-grid tbody th {
    background: #d4d0c8;
    border: 1px solid;
    border-color: #fff #404040 #404040 #fff;
  }

  .load-grid td {
    height: 18px;
    border: 1px solid #d4d0c8;
    vertical-align: middle;
  }

  .load-grid .blank td {
    height: 17px;
  }

  .load-grid .left {
    text-align: left;
  }

  .load-grid .sel {
    background: #0a246a;
    color: #fff;
  }

  .grid-empty {
    height: 20px;
    border-top: 1px solid #000;
  }

  .loads-btns {
    flex: none;
    display: flex;
    height: 24px;
    margin: 5px 0 0 6px;
    padding-right: 2px;
  }

  .save-default {
    width: 88px;
  }

  .loads-right {
    display: flex;
    gap: 3.6px;
    margin-left: auto;
  }

  /* editor window */
  .ed-left {
    flex: none;
    width: 200px;
    height: 58px;
    padding: 5px 8px 0 7px;
    border-bottom: 1px solid #808080;
    box-shadow: 0 1px #fff;
  }

  .ed-name {
    display: flex;
    align-items: center;
    justify-content: space-between;
  }

  .ed-name .field {
    height: 18px;
    line-height: 13px;
  }

  .ed-add {
    display: flex;
    justify-content: space-between;
    margin: 4px 0 0 -3px;
  }

  .ed-btn {
    width: 83px;
    height: 26px;
  }

  .ed-main {
    flex: 1;
    display: flex;
    flex-direction: column;
    align-items: flex-end;
    min-width: 0;
  }

  .ed-group {
    width: 482px;
    height: 101px;
    display: grid;
    grid-template-columns: 66px 130px 18px 115px 130px;
    grid-template-rows: 16px 19px 20px 19px 19px;
    align-items: center;
    padding: 6px 0 0 7px;
    border: 1px solid #808080;
    border-top: 0;
    box-shadow: inset 1px 0 #fff, 0 1px #fff;
    margin-right: 1px;
  }

  .ed-group > span {
    align-self: start;
  }

  .ed-group .field {
    height: 100%;
    min-height: 0;
    line-height: 13px;
    padding-top: 2px;
  }

  .colour {
    grid-column: 2;
    grid-row: 1;
    height: 16px;
    text-align: center;
    background: #c0c4e0;
    border: 1px solid;
    border-color: #fff #404040 #404040 #fff;
  }

  .ed-l1 { grid-column: 1; grid-row: 2; }
  .ed-l2 { grid-column: 1; grid-row: 3; }
  .ed-group :global(.ed-f1) { grid-column: 2; grid-row: 2; }
  .ed-group :global(.ed-f2) { grid-column: 2; grid-row: 3; }
  .ed-r1 { grid-column: 4; grid-row: 2; }
  .ed-r2 { grid-column: 4; grid-row: 3; }
  .ed-r3 { grid-column: 4; grid-row: 4; }
  .ed-r4 { grid-column: 4; grid-row: 5; }
  .ed-group :global(.ed-g1) { grid-column: 5; grid-row: 2; }
  .ed-group :global(.ed-g2) { grid-column: 5; grid-row: 3; }
  .ed-group :global(.ed-g3) { grid-column: 5; grid-row: 4; }
  .ed-group :global(.ed-g4) { grid-column: 5; grid-row: 5; }

  .ed-close {
    width: 82px;
    height: 26px;
    margin: 4px 2px 0 0;
  }
</style>
